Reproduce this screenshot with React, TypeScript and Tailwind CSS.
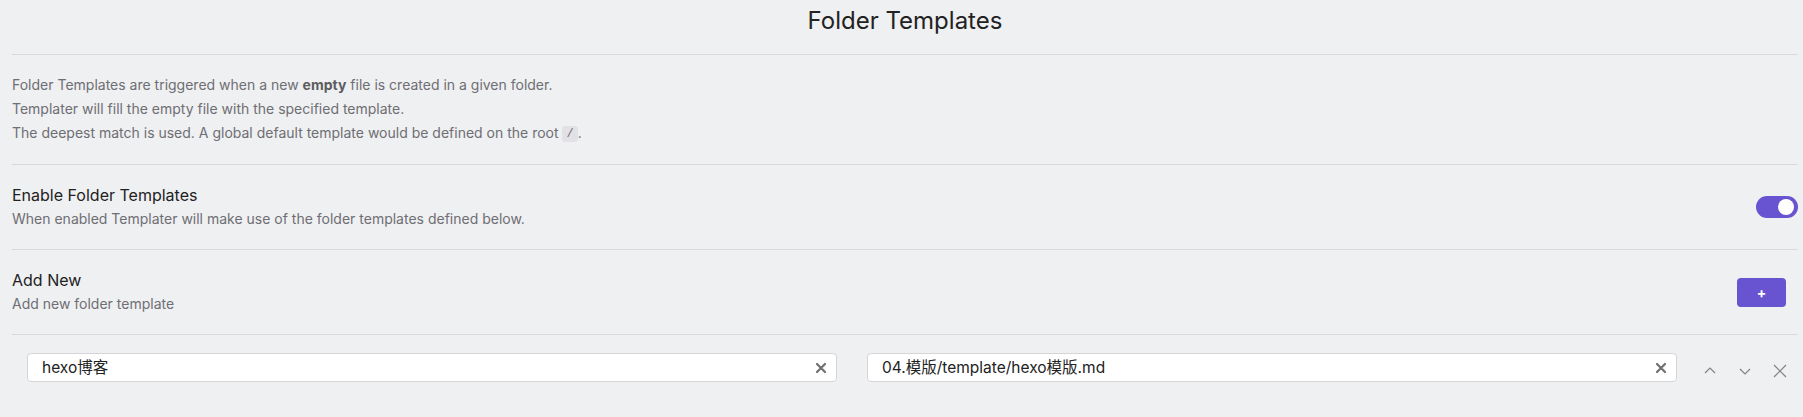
import React from "react";

const font = { fontFamily: 'Inter, "Noto Sans CJK SC", sans-serif' };

function ClearIcon() {
  return (
    <svg width="12" height="12" viewBox="0 0 12 12" className="text-[#6f6f73]">
      <path d="M2 2 L10 10 M10 2 L2 10" stroke="currentColor" strokeWidth="2.2" strokeLinecap="round" />
    </svg>
  );
}

function SearchInput({ value }: { value: string }) {
  return (
    <div className="flex h-[29px] flex-1 items-center rounded-[4px] border border-[#d5d5d8] bg-white pl-[14px] pr-[9px]">
      <span className="flex-1 text-[15.5px] text-[#222222]">{value}</span>
      <ClearIcon />
    </div>
  );
}

function SettingItem({
  name,
  desc,
  children,
}: {
  name: string;
  desc: string;
  children: React.ReactNode;
}) {
  return (
    <div className="flex items-center justify-between border-b border-[#d9d9dc] pt-[18px] pb-[18px]">
      <div>
        <div className="text-[16px] leading-[24px] text-[#222222]">{name}</div>
        <div className="text-[14px] leading-[24px] text-[#6e6e73]">{desc}</div>
      </div>
      {children}
    </div>
  );
}

export default function App() {
  return (
    <div className="min-h-[417px] w-full bg-[#eff0f2] pl-[12px] pr-[5px]" style={font}>
      <div className="h-[55px] border-b border-[#d9d9dc] pt-[5px] text-center text-[24px] leading-[32px] text-[#222222]">
        Folder Templates
      </div>

      <div className="border-b border-[#d9d9dc] pt-[18px] pb-[19px] text-[14px] leading-[24px] text-[#6e6e73]">
        <div>
          Folder Templates are triggered when a new <strong className="font-bold text-[#5c5c60]">empty</strong> file
          is created in a given folder.
        </div>
        <div>Templater will fill the empty file with the specified template.</div>
        <div className="h-[24px]">
          The deepest match is used. A global default template would be defined on the root{" "}
          <code className="inline-block rounded-[3px] bg-[#e2e2e6] px-[4px] align-middle text-[12px] leading-[16px]">
            /
          </code>
          .
        </div>
      </div>

      <SettingItem
        name="Enable Folder Templates"
        desc="When enabled Templater will make use of the folder templates defined below."
      >
        <div className="flex h-[22px] w-[42px] items-center justify-end rounded-full bg-[#6853d0] pr-[4px]">
          <div className="h-[16px] w-[16px] rounded-full bg-white" />
        </div>
      </SettingItem>

      <SettingItem name="Add New" desc="Add new folder template">
        <button className="mr-[12px] flex h-[29px] w-[49px] items-center justify-center rounded-[4px] bg-[#6853d0] text-[14px] font-bold text-white">
          +
        </button>
      </SettingItem>

      <div className="flex items-center pt-[18px] pl-[15px]">
        <div className="flex flex-1 items-center gap-[30px]">
          <SearchInput value="hexo博客" />
          <SearchInput value="04.模版/template/hexo模版.md" />
        </div>
        <div className="ml-[22px] flex items-center gap-[13px] pr-[7px] pt-[6px] text-[#808085]">
          <svg width="22" height="22" viewBox="0 0 22 22">
            <path d="M6 13 L11 8 L16 13" fill="none" stroke="currentColor" strokeWidth="1.2" />
          </svg>
          <svg width="22" height="22" viewBox="0 0 22 22">
            <path d="M6 9 L11 14 L16 9" fill="none" stroke="currentColor" strokeWidth="1.2" />
          </svg>
          <svg width="22" height="22" viewBox="0 0 22 22">
            <path d="M5 5 L17 17 M17 5 L5 17" fill="none" stroke="currentColor" strokeWidth="1.2" />
          </svg>
        </div>
      </div>
    </div>
  );
}
